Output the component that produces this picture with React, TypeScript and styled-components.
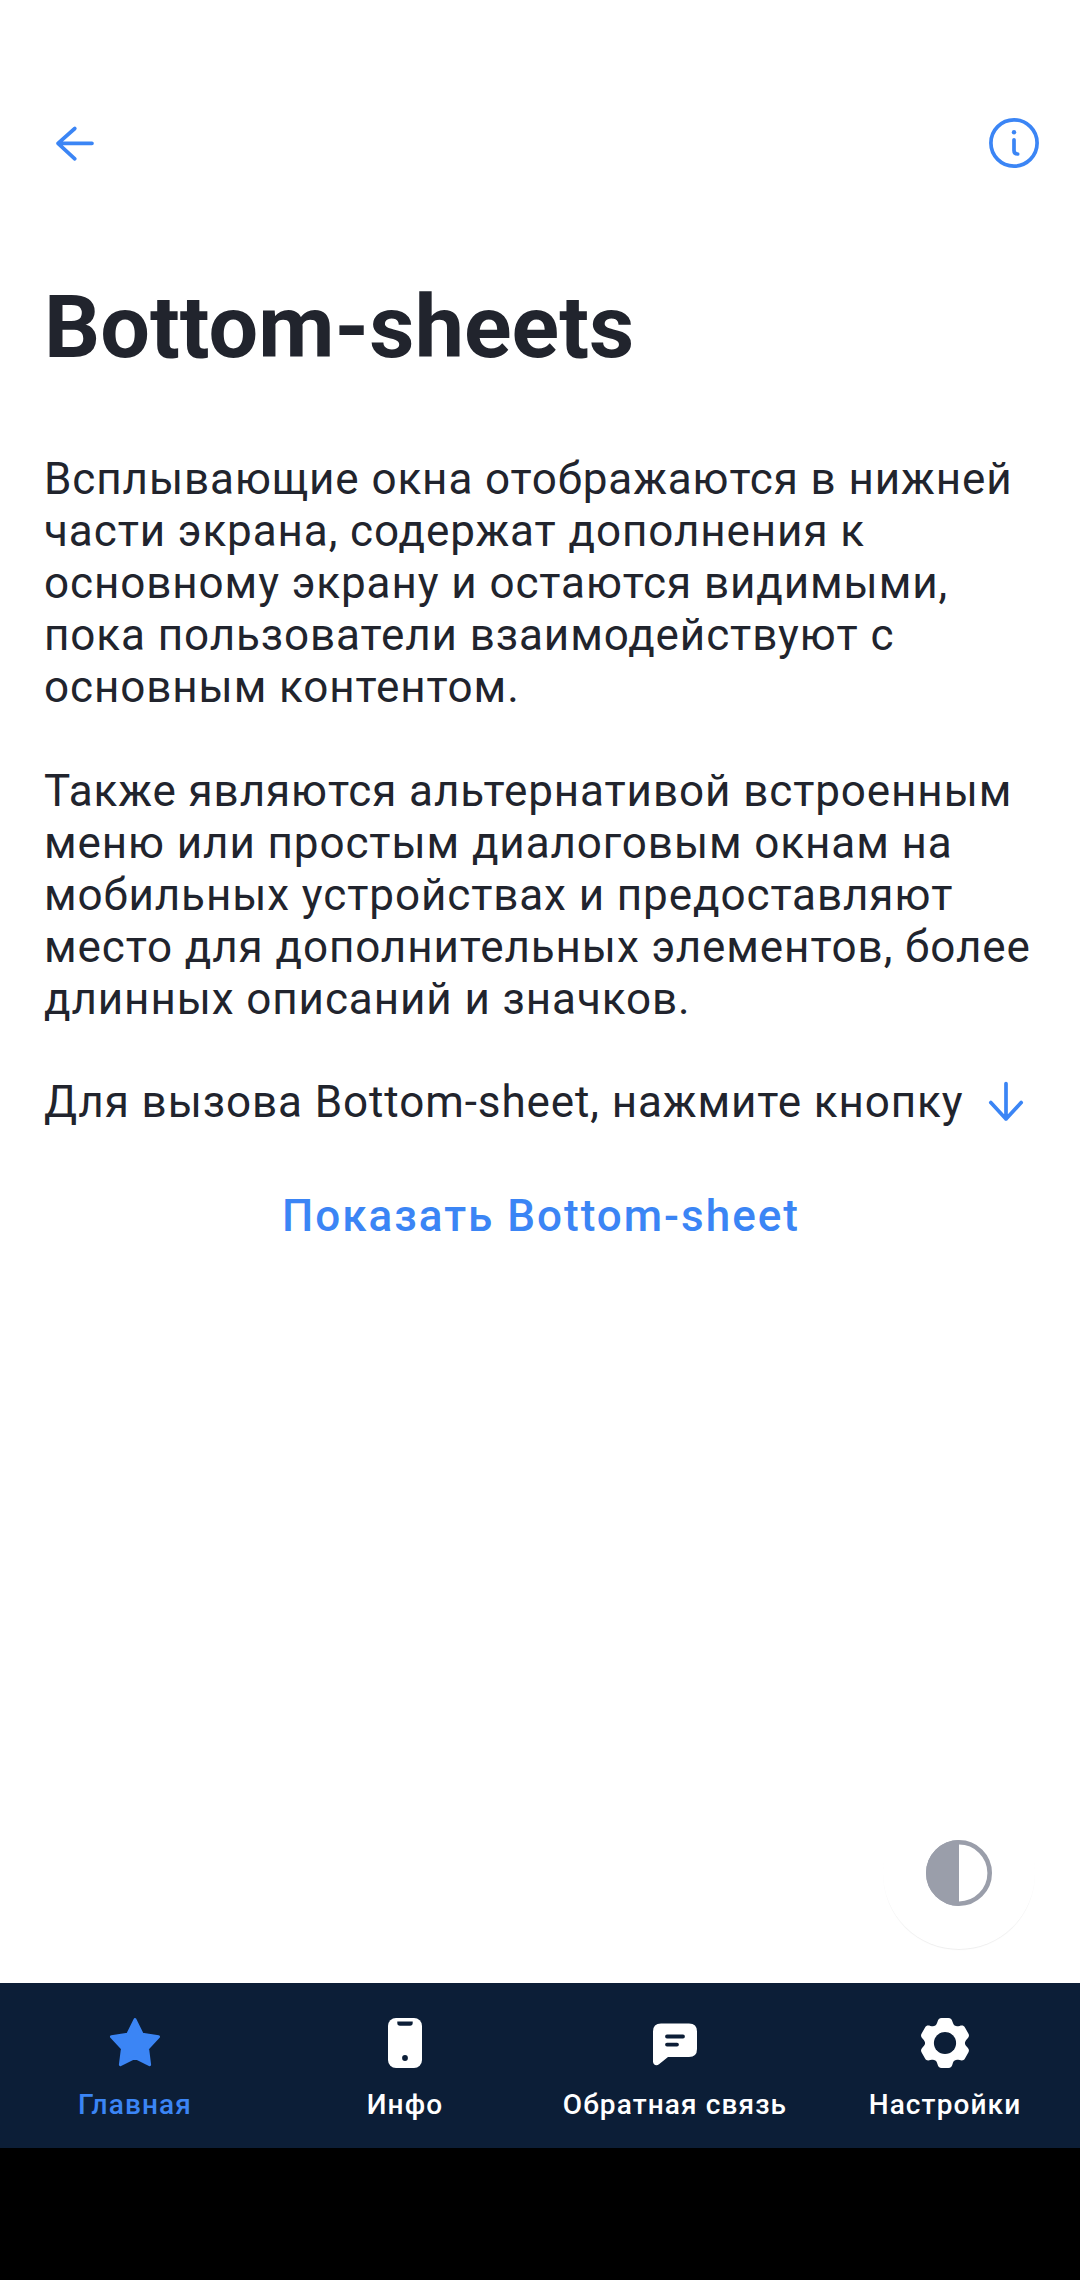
import React from 'react';
import styled, { createGlobalStyle } from 'styled-components';

const Global = createGlobalStyle`
  * { box-sizing: border-box; }
  body { margin: 0; background: #fff; font-family: Roboto, "Noto Sans", sans-serif; color: #21242d; }
`;
const Screen = styled.div`
  position: relative;
  display: flex;
  flex-direction: column;
  width: 1080px;
  height: 2280px;
`;
const Header = styled.header`
  display: flex;
  align-items: center;
  justify-content: space-between;
  height: 170px;
  margin-top: 58px;
  padding: 0 39px 0 48px;
`;
const IconButton = styled.button`
  display: flex;
  padding: 0;
  border: 0;
  background: none;
`;
const LineIcon = styled.svg`
  display: block;
  flex: none;
  fill: none;
  stroke: #3b85f5;
  stroke-width: 3.7;
  stroke-linecap: round;
  stroke-linejoin: round;
`;
const Body = styled.main`
  flex: 1;
  padding: 0 44px;
  font-size: 44px;
  line-height: 52px;
  letter-spacing: 0.91px;
`;
const Title = styled.h1`
  margin: 54px 0 81px;
  font-size: 88px;
  line-height: 90px;
  letter-spacing: 0.08px;
  font-weight: 700;
`;
const Text = styled.p`
  margin: 0 0 52px;
  white-space: nowrap;
`;
const Hint = styled.div`
  display: flex;
  align-items: center;
  gap: 21px;
  margin: -1px 0 62px;
  white-space: nowrap;
`;
const Action = styled.button`
  display: block;
  margin: 0 auto;
  padding: 0 0 0 2px;
  border: 0;
  background: none;
  color: #3b85f5;
  font: 500 44px/52px Roboto, sans-serif;
  letter-spacing: 2px;
`;
const ThemeButton = styled.button`
  position: absolute;
  left: 883px;
  top: 1797px;
  display: flex;
  align-items: center;
  justify-content: center;
  width: 152px;
  height: 152px;
  padding: 0;
  border: 0;
  border-radius: 50%;
  background: #fff;
  box-shadow: 0 1.5px 1px -0.5px rgba(0, 0, 0, 0.07);
`;
const Nav = styled.nav`
  display: grid;
  grid-template-columns: repeat(4, 1fr);
  height: 165px;
  background: #0c1e37;
`;
const Tab = styled.a<{ $active?: boolean }>`
  display: flex;
  flex-direction: column;
  align-items: center;
  gap: 19px;
  padding-top: 33px;
  color: ${(p) => (p.$active ? '#3b85f5' : '#fff')};
  font-size: 28px;
  font-weight: 500;
  line-height: 32px;
  letter-spacing: 1.12px;
  white-space: nowrap;
`;
const TabIcon = styled.svg`
  display: block;
  fill: currentColor;
`;
const SystemBar = styled.footer`
  height: 132px;
  background: #000;
`;

const navy = '#0c1e37';
const tooth =
  'M0 0L-10.2 -17.1C-8.8 -17.9 -8.1 -19.2 -7.5 -21.2C-6.7 -23.8 -5.8 -25 -3.4 -25H3.4C5.8 -25 6.7 -23.8 7.5 -21.2C8.1 -19.2 8.8 -17.9 10.2 -17.1Z';

const icons = {
  star: (
    <path
      d="M27 3.6L34.3 18.3L50.5 20.7L39.6 32.6L41.6 48.7L27 41.4L12.4 48.7L14.4 32.6L3.5 20.7L19.7 18.3Z"
      stroke="currentColor"
      strokeWidth="3"
      strokeLinejoin="round"
    />
  ),
  phone: (
    <>
      <rect x="10" y="2" width="34" height="50" rx="8" />
      <path d="M19.3 5.6H34.7V7A2.7 2.7 0 0 1 32 9.7H22A2.7 2.7 0 0 1 19.3 7Z" fill={navy} />
      <circle cx="27" cy="42" r="2.9" fill={navy} />
    </>
  ),
  chat: (
    <>
      <path d="M5 15.5Q5 7.5 13 7.5H41Q49 7.5 49 15.5V33Q49 41 41 41H20L11 48.3C8.500 50.2 5 49 5 45.500Z" />
      <path d="M19 20.500H35M19 28.600H29" stroke={navy} strokeWidth="3.800" strokeLinecap="round" />
    </>
  ),
  gear: (
    <g transform="translate(27 27)">
      <circle r="19" />
      {[0, 60, 120, 180, 240, 300].map((a) => (
        <path key={a} d={tooth} transform={`rotate(${a})`} />
      ))}
      <circle r="11.1" fill={navy} />
    </g>
  ),
};

const tabs: { label: string; icon: keyof typeof icons }[] = [
  { label: 'Главная', icon: 'star' },
  { label: 'Инфо', icon: 'phone' },
  { label: 'Обратная связь', icon: 'chat' },
  { label: 'Настройки', icon: 'gear' },
];

export default function App() {
  return (
    <Screen>
      <Global />
      <Header>
        <IconButton aria-label="Назад">
          <LineIcon width="54" height="54" viewBox="0 0 54 54">
            <path d="M44 27.300H10M26.800 12.500L10 27.300L26.800 42.800" />
          </LineIcon>
        </IconButton>
        <IconButton aria-label="Инфо">
          <LineIcon width="54" height="54" viewBox="0 0 54 54">
            <circle cx="27" cy="27" r="23.1" />
            <path d="M27 23.800V34.500Q27 38 30.700 38" />
            <circle cx="27" cy="16.200" r="2.200" fill="#3b85f5" stroke="none" />
          </LineIcon>
        </IconButton>
      </Header>
      <Body>
        <Title>Bottom-sheets</Title>
        <Text>
          Всплывающие окна отображаются в нижней<br />
          части экрана, содержат дополнения к<br />
          основному экрану и остаются видимыми,<br />
          пока пользователи взаимодействуют с<br />
          основным контентом.
        </Text>
        <Text>
          Также являются альтернативой встроенным<br />
          меню или простым диалоговым окнам на<br />
          мобильных устройствах и предоставляют<br />
          место для дополнительных элементов, более<br />
          длинных описаний и значков.
        </Text>
        <Hint>
          Для вызова Bottom-sheet, нажмите кнопку
          <LineIcon width="44" height="52" viewBox="0 0 44 52">
            <path d="M22 7.500V43M6.800 26.500L22 43L37.200 26.500" />
          </LineIcon>
        </Hint>
        <Action>Показать Bottom-sheet</Action>
      </Body>
      <Nav>
        {tabs.map((t, i) => (
          <Tab key={t.label} $active={i === 0}>
            <TabIcon width="54" height="54" viewBox="0 0 54 54">{icons[t.icon]}</TabIcon>
            {t.label}
          </Tab>
        ))}
      </Nav>
      <SystemBar />
      <ThemeButton aria-label="Сменить тему">
        <svg width="66" height="66" viewBox="0 0 66 66">
          <circle cx="33" cy="33" r="30.700" fill="none" stroke="#9a9eaa" strokeWidth="4.600" />
          <path d="M33 0A33 33 0 0 0 33 66Z" fill="#9a9eaa" />
        </svg>
      </ThemeButton>
    </Screen>
  );
}
